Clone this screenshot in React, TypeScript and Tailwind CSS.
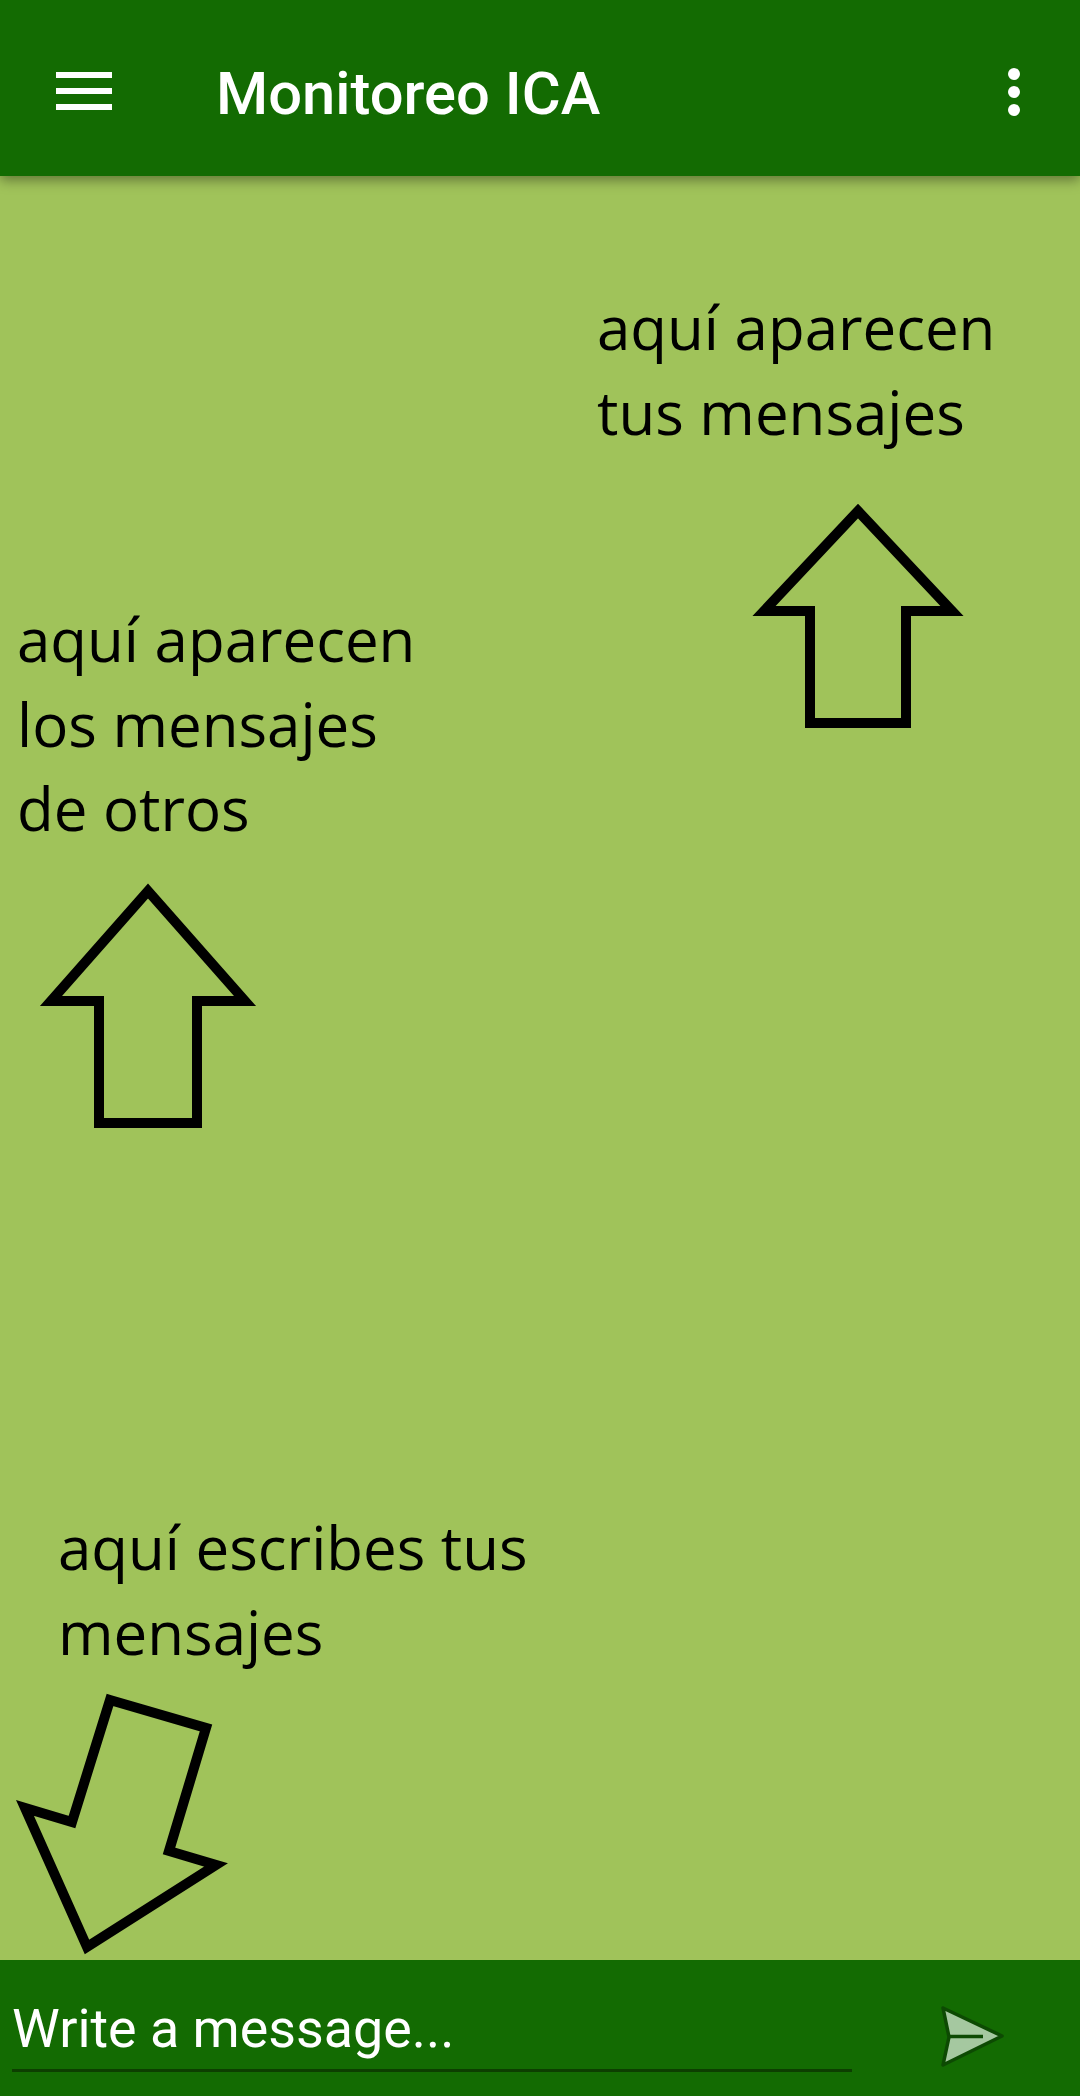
import React from 'react'

const noteFont = "font-['Open_Sans',sans-serif]"

const Note = ({ lines, className }: { lines: string[]; className: string }) => (
  <div className={`absolute text-[60px] leading-[84.5px] text-black ${noteFont} ${className}`}>
    {lines.map((line) => (
      <div key={line} className="whitespace-nowrap">
        {line}
      </div>
    ))}
  </div>
)

const Outline = ({ points }: { points: string }) => (
  <polygon points={points} fill="none" stroke="#000" strokeWidth="10" strokeMiterlimit="10" />
)

const App = () => {
  return (
    <div className="flex h-[2096px] w-[1080px] flex-col overflow-hidden bg-[#a0c35a] font-['Roboto',sans-serif]">
      <header className="z-10 flex h-[176px] shrink-0 items-start justify-between bg-[#136b02] shadow-[0_4px_12px_rgba(0,0,0,0.4)]">
        <div className="flex items-start">
          <div className="ml-[56px] mt-[72px] flex w-[56px] flex-col gap-[10px]">
            <span className="h-[6px] bg-white" />
            <span className="h-[6px] bg-white" />
            <span className="h-[6px] bg-white" />
          </div>
          <h1 className="ml-[104px] mt-[65px] text-[59.7px] font-medium leading-none text-white">Monitoreo ICA</h1>
        </div>
        <div className="mr-[60px] mt-[68px] flex flex-col gap-[6px]">
          <span className="size-[12px] rounded-full bg-white" />
          <span className="size-[12px] rounded-full bg-white" />
          <span className="size-[12px] rounded-full bg-white" />
        </div>
      </header>

      <main className="relative flex-1">
        <Note lines={['aquí aparecen', 'tus mensajes']} className="left-[597px] top-[109px]" />
        <Note lines={['aquí aparecen', 'los mensajes', 'de otros']} className="left-[17px] top-[421px]" />
        <Note lines={['aquí escribes tus', 'mensajes']} className="left-[58px] top-[1329px]" />
        <svg className="absolute left-0 top-[-176px]" width="1080" height="2096" viewBox="0 0 1080 2096">
          <Outline points="858,511 952,611 906,611 906,723 810,723 810,611 764,611" />
          <Outline points="148,891 245,1001 197,1001 197,1123 99,1123 99,1001 51,1001" />
          <Outline points="110,1700 206,1728 169,1851 216,1865 87,1947 25,1808 72,1822" />
        </svg>
      </main>

      <footer className="flex h-[136px] shrink-0 items-start bg-[#136b02]">
        <div className="ml-[12px] mt-[34px] h-[78px] w-[840px] border-b-[3px] border-[#0d3f01] text-[53.8px] leading-[70px] text-white">
          Write a message...
        </div>
        <svg className="ml-[84px] mt-[44px]" width="70" height="66" viewBox="0 0 70 66">
          <path
            d="M7 4 L66 32 L7 61 L13 33 Z"
            fill="#a5c8a0"
            stroke="#0d4a03"
            strokeWidth="3.5"
            strokeLinejoin="round"
          />
          <path d="M13 32.5 H47" stroke="#0d4a03" strokeWidth="3.5" />
        </svg>
      </footer>
    </div>
  )
}

export default App
